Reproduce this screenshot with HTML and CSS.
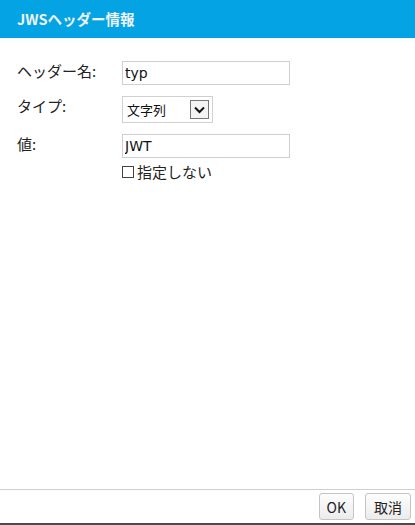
FILE: index.html
```html
<!DOCTYPE html>
<html lang="ja">
<head>
    <meta charset="UTF-8">
    <title>JWSヘッダー情報</title>
    <link rel="stylesheet" href="styles.css">
</head>
<body>
    <div class="dialog">
        <div class="dialog-header">JWSヘッダー情報</div>
        <div class="dialog-body">
            <div class="form-grid">
                <label class="form-label" for="name">ヘッダー名:</label>
                <div class="form-field">
                    <input type="text" id="name" class="text-input" value="typ">
                </div>

                <label class="form-label">タイプ:</label>
                <div class="form-field">
                    <div class="fake-select">
                        <span class="fake-select-text">文字列</span>
                        <span class="fake-select-btn">
                            <svg width="11" height="8" viewBox="0 0 11 8"><path d="M1 1.5 L5.5 6 L10 1.5" fill="none" stroke="#111" stroke-width="2"/></svg>
                        </span>
                    </div>
                </div>

                <label class="form-label" for="value">値:</label>
                <div class="form-field">
                    <input type="text" id="value" class="text-input" value="JWT">
                    <label class="check-row">
                        <span class="check-box"></span>
                        <span>指定しない</span>
                    </label>
                </div>
            </div>
        </div>
        <div class="dialog-footer">
            <button class="btn btn-ok">OK</button>
            <button class="btn">取消</button>
        </div>
    </div>
</body>
</html>
```

FILE: styles.css
```css
body {
    margin: 0;
    font-family: "Noto Sans CJK JP", "DejaVu Sans", sans-serif;
    background: #fff;
    color: #222;
}

.dialog {
    width: 415px;
    height: 525px;
    display: flex;
    flex-direction: column;
    box-sizing: border-box;
    border-bottom: 2px solid #4a4a4a;
}

.dialog-header {
    height: 38px;
    background: #03a3e4;
    color: #eef3f6;
    font-weight: bold;
    font-size: 14.5px;
    line-height: 38px;
    padding-left: 17px;
}

.dialog-body {
    flex: 1;
    padding: 23px 0 0 17px;
}

.form-grid {
    display: grid;
    grid-template-columns: 105px 1fr;
    row-gap: 11px;
}

.form-label {
    font-size: 15px;
    line-height: 20px;
    color: #222;
}

.text-input {
    display: block;
    width: 168px;
    height: 24px;
    box-sizing: border-box;
    border: 1px solid #cfcfcf;
    padding: 0 2px;
    font-family: "DejaVu Sans", "Noto Sans CJK JP", sans-serif;
    font-size: 14px;
    color: #111;
    outline: none;
}

.fake-select {
    display: flex;
    align-items: center;
    width: 91px;
    height: 27px;
    box-sizing: border-box;
    border: 1px solid #d0d0d0;
    padding: 0 3px 0 4px;
}

.fake-select-text {
    flex: 1;
    font-size: 13px;
    line-height: 20px;
    color: #111;
}

.fake-select-btn {
    width: 19px;
    height: 19px;
    box-sizing: border-box;
    border: 1px solid #777;
    background: #f4f4f4;
    display: flex;
    align-items: center;
    justify-content: center;
}

.check-row {
    display: flex;
    align-items: center;
    gap: 3px;
    margin-top: 6px;
    font-size: 15px;
    line-height: 16px;
    color: #222;
}

.check-box {
    width: 10px;
    height: 10px;
    border: 1px solid #444;
    background: #fff;
}

.dialog-footer {
    border-top: 1px solid #cfcfcf;
    height: 33px;
    display: flex;
    justify-content: flex-end;
    align-items: center;
    gap: 11px;
    padding-right: 4px;
}

.btn {
    height: 27px;
    padding: 0 8px;
    border: 1px solid #c4c4c4;
    border-radius: 3px;
    background: linear-gradient(#fdfdfd, #ececec);
    font-family: "Noto Sans CJK JP", "DejaVu Sans", sans-serif;
    font-size: 14px;
    color: #222;
    cursor: pointer;
}

.btn-ok {
    padding: 0 7px;
}
```
